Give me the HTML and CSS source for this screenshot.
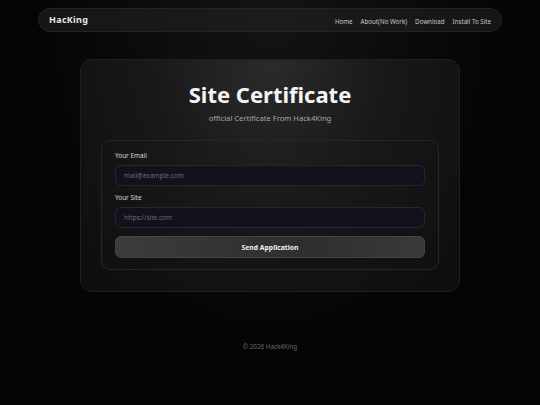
FILE: index.html
```html
<!DOCTYPE html>
<html lang="en">
<head>
    <meta charset="UTF-8">
    <meta name="viewport" content="width=device-width, initial-scale=1.0">
    <title>HacKing - Site Certificate</title>
    <link rel="stylesheet" href="styles.css">
</head>
<body>
    <nav class="navbar">
        <div class="brand">HacKing</div>
        <ul class="nav-links">
            <li><a href="#">Home</a></li>
            <li><a href="#">About(No Work)</a></li>
            <li><a href="#">Download</a></li>
            <li><a href="#">Install To Site</a></li>
        </ul>
    </nav>

    <main class="card">
        <h1>Site Certificate</h1>
        <p class="subtitle">official Certificate From Hack4King</p>

        <form class="cert-form" action="#" method="post">
            <label for="email">Your Email</label>
            <input type="email" id="email" name="email" placeholder="mail@example.com">

            <label for="site">Your Site</label>
            <input type="text" id="site" name="site" placeholder="https://site.com">

            <button type="submit">Send Application</button>
        </form>
    </main>

    <footer class="footer">© 2026 Hack4King</footer>
</body>
</html>
```

FILE: styles.css
```css
* {
    box-sizing: border-box;
}

body {
    font-family: 'Noto Sans', 'Open Sans', sans-serif;
    background: radial-gradient(ellipse at 50% 0%, #141414 0%, #050505 60%);
    background-color: #040404;
    color: #e0e0e0;
    margin: 0;
    padding: 8px 0 0;
    min-height: 100vh;
    display: flex;
    flex-direction: column;
    align-items: center;
    -webkit-font-smoothing: antialiased;
}

.navbar {
    width: 464px;
    height: 24px;
    display: flex;
    align-items: center;
    justify-content: space-between;
    padding: 0 10px;
    background: linear-gradient(90deg, #151515, #1c1c1c 50%, #151515);
    border: 1px solid #232323;
    border-radius: 12px;
}

.brand {
    font-size: 9px;
    font-weight: 700;
    color: #e6e6e6;
    letter-spacing: 0.3px;
    line-height: 12px;
}

.nav-links {
    list-style: none;
    display: flex;
    align-items: center;
    gap: 8px;
    margin: 0 0 1px;
    padding: 0;
    line-height: 10px;
}

.nav-links a {
    color: #c8c8c8;
    text-decoration: none;
    font-size: 6.2px;
}

.card {
    width: 380px;
    margin-top: 27px;
    padding: 18px 20px 21px;
    background: radial-gradient(ellipse at 50% 0%, #2b2b2b 0%, #181818 45%, #0d0d0d 100%);
    border: 1px solid #1f1f1f;
    border-radius: 12px;
    text-align: center;
}

h1 {
    margin: 0;
    font-size: 22px;
    font-weight: 700;
    color: #f4f4f4;
    line-height: 32px;
}

.subtitle {
    margin: 3px 0 0;
    font-size: 7.6px;
    color: #a8a8a8;
}

.cert-form {
    margin-top: 17px;
    padding: 11px 13px 11px;
    text-align: left;
    background: radial-gradient(ellipse at 50% 0%, #202020 0%, #151515 60%, #101010 100%);
    border: 1px solid #262626;
    border-radius: 9px;
}

label {
    display: block;
    font-size: 6.4px;
    font-weight: 400;
    color: #dcdcdc;
    margin-bottom: 5px;
    line-height: 8px;
}

input {
    display: block;
    width: 100%;
    height: 21px;
    padding: 0 8px;
    margin-bottom: 8px;
    border: 1px solid #262633;
    border-radius: 6px;
    background: #12121c;
    color: #e0e0e0;
    font-family: inherit;
    font-size: 6.5px;
    outline: none;
}

input::placeholder {
    color: #6a6a75;
}

button {
    display: block;
    width: 100%;
    height: 22px;
    margin-top: 1px;
    border: 1px solid #444;
    border-radius: 6px;
    background: linear-gradient(90deg, #3c3c3c, #2e2e2e 60%, #3a3a3a);
    color: #f0f0f0;
    font-family: inherit;
    font-size: 6.8px;
    font-weight: 700;
    cursor: pointer;
}

.footer {
    margin-top: 50px;
    font-size: 6.3px;
    color: #6a6a6a;
}
```
